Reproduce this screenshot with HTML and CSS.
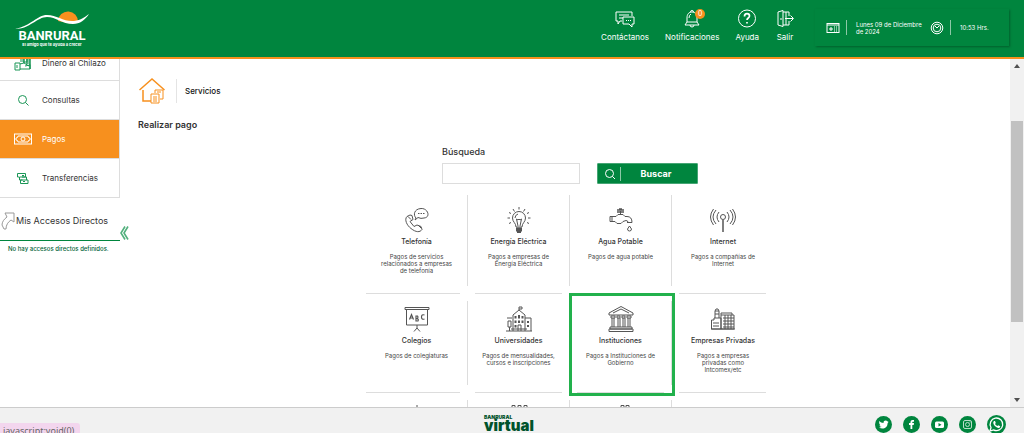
FILE: index.html
```html
<!DOCTYPE html>
<html lang="es">
<head>
<meta charset="utf-8">
<title>Banrural Virtual</title>
<link rel="stylesheet" href="styles.css">
</head>
<body>
<header class="topbar">
  <a class="brand" href="#">
    <svg class="brand-hill" width="74" height="21" viewBox="0 0 74 21"><path d="M43 12a10 10 0 1 1 20 1q-10 2-20-1z" fill="#f7901e"/><path d="M0 20C16 17 22 6 32 6c10 0 17 7 27 6 7-1 11-4 15-7-4 6-9 10-16 10-11 0-17-7-26-7C22 8 15 20 0 20z" fill="#fff"/></svg>
    <span class="brand-name">BANRURAL</span>
    <span class="brand-tag">El amigo que te ayuda a crecer</span>
  </a>
  <nav class="topnav">
    <a class="topnav-item" href="#">
      <svg width="20" height="20" viewBox="0 0 20 20" class="line"><path d="M7 12H5l-2 3v-3H1V3h16v4M4 6h10M4 9h4M8 8h11v7h-2v3l-3-3H8z"/><path d="M11 11.500h1m1 0h1m1 0h1"/></svg>
      Contáctanos
    </a>
    <a class="topnav-item" href="#">
      <span class="bell">
        <svg width="20" height="20" viewBox="0 0 20 20" class="line"><path d="M5 13V9c0-4 2-6 5-6s5 2 5 6v4l2 3H3l2-3zh10M8.500 3a1.500 1.500 0 1 1 3 0M8 16a2 2 0 0 0 4 0M7 9q0-3 2-4"/></svg>
        <span class="badge">0</span>
      </span>
      Notificaciones
    </a>
    <a class="topnav-item" href="#">
      <svg width="20" height="20" viewBox="0 0 20 20" class="line"><circle cx="10" cy="9.500" r="8.500"/><path d="M7.500 7.500c0-4 5-3.500 5-.5 0 2-2.500 2-2.500 4" stroke-width="1.700"/><path d="M10 13v1.500" stroke-width="1.700"/></svg>
      Ayuda
    </a>
    <a class="topnav-item" href="#">
      <svg width="20" height="20" viewBox="0 0 20 20" class="line"><path d="M3 3l5-1.500v16L3 16zM8 3h6v4M14 12v4H8M6 9v2M10 9.500h8M15.500 6.500l3 3-3 3M11 3v13" /></svg>
      Salir
    </a>
  </nav>
  <div class="clock">
    <svg width="14" height="14" viewBox="0 0 14 14" class="line"><rect x="1" y="2.500" width="12" height="9"/><path d="M1 4h12M4 7h2v2H4zM8 6h1m1 0h1M8 8h1m1 0h1M8 10h1m1 0h1"/></svg>
    <span class="clock-date">Lunes 09 de Diciembre de 2024</span>
    <svg width="14" height="14" viewBox="0 0 14 14" class="line"><circle cx="7" cy="7" r="5.800"/><circle cx="7" cy="7" r="3.800"/><path d="M5 5l2 2 2-2"/></svg>
    <span class="clock-time">10:53 Hrs.</span>
  </div>
</header>

<div class="middle">
  <aside class="sidebar">
    <nav class="menu">
      <a class="menu-item" href="#">
        <svg width="18" height="18" viewBox="0 0 18 18" class="green"><path d="M7 8V2h8v8M9 4h4v4H9zM1 9h5v7H1zM6 10l4-1 5 3 1-2M6 15h10v-4l-5 1M3 11v3"/><path d="M10 2v7m3-7v8M16 3v12" stroke-width="1.500"/></svg>
        Dinero al Chilazo
      </a>
      <a class="menu-item" href="#">
        <svg width="18" height="18" viewBox="0 0 18 18" class="green"><circle cx="8.500" cy="8.500" r="4"/><path d="M11.500 11.500l3 3"/></svg>
        Consultas
      </a>
      <a class="menu-item active" href="#">
        <svg width="18" height="18" viewBox="0 0 18 18" class="line"><rect x="0.500" y="4" width="17" height="10"/><path d="M4 6h10q0 2 2 2v2q-2 0-2 2H4q0-2-2-2V8q2 0 2-2z"/><circle cx="9" cy="9" r="2"/></svg>
        Pagos
      </a>
      <a class="menu-item" href="#">
        <svg width="18" height="18" viewBox="0 0 18 18" class="green"><path d="M5.500 8H3.500V4.500h8V8H6M5.500 8v3h3M8 8h4.500v3M14 11H6.500v3.500H14V11M8 6.500h2M9 12.500h2"/></svg>
        Transferencias
      </a>
    </nav>
    <div class="shortcuts">
      <h2 class="shortcuts-title">
        <svg width="14" height="18" viewBox="0 0 14 18"><path d="M4 1h9v9l-3-2c-3 2-5 5-5 9H3L1 13c0-3 2-6 5-8z" fill="none" stroke="#999"/></svg>
        Mis Accesos Directos
      </h2>
      <p class="shortcuts-empty">No hay accesos directos definidos.</p>
    </div>
    <button class="collapse" type="button" aria-label="Ocultar menú">
      <svg width="9" height="14" viewBox="0 0 9 14"><path d="M5 .5L1 7l4 6.500M8 .5L4 7l4 6.500" fill="none" stroke="#52b07d" stroke-width="1.600"/></svg>
    </button>
  </aside>

  <main class="content">
    <div class="crumb">
      <svg width="28" height="28" viewBox="0 0 28 28" fill="none" stroke="#f7901e" stroke-width="1.500"><path d="M1.500 13L14 2l12.500 11M5 13v11h8"/><path d="M17 16v-3h8v9h-3M19 15h4" stroke-width="1"/><path d="M13 17h8v9h-8zM15 20h4M15 22h4M15 24h4" stroke-width="1"/></svg>
      <span class="crumb-text">Servicios</span>
    </div>
    <h1 class="page-title">Realizar pago</h1>

    <form class="search">
      <label class="search-label" for="q">Búsqueda</label>
      <div class="search-row">
        <input class="search-input" id="q" type="text">
        <button class="search-button" type="button">
          <svg width="12" height="12" viewBox="0 0 12 12" class="line"><circle cx="5.500" cy="5.500" r="4"/><path d="M8.500 8.500L11 11"/></svg>
          <span class="search-button-text">Buscar</span>
        </button>
      </div>
    </form>

    <div class="services">
      <a class="cell" href="#"><div class="tile">
        <svg width="26" height="26" viewBox="0 0 26 26" class="gray"><path d="M6 8L3 9.500c-3 3 0 9 4 12 5 4 9 4 11 1l-1-3-4-1.500-3 1.500-4-5 3-2-1-4zM4 9.500l3 3M14 18l3 3"/><path d="M12 11c-3-3-2-9 5-9.500s10 9 3 9.500q-3 1-6-.5L11 13z"/><path d="M14 6.500h1.500m1 0H18m1 0h1.500"/></svg>
        <h3 class="tile-title">Telefonía</h3><p class="tile-text">Pagos de servicios relacionados a empresas de telefonía</p></div></a>
      <a class="cell" href="#"><div class="tile">
        <svg width="26" height="26" viewBox="0 0 26 26" class="gray"><path d="M10 20c0-4-3.500-5-3.500-9a6.500 6.500 0 0 1 13 0c0 4-3.500 5-3.500 9zM9 11q0-3 3-4"/><path d="M10 21.500h6M10 23.500h6M11 25h4" stroke-width="1.800"/><path d="M12 19l-1.500-7 1.500 1 1-1 1 1 1.500-1L14 19M13 0v2.500M7 2l1.500 2.500M19 2l-1.500 2.500M3 5.500l2 1M23 5.500l-2 1M1.500 11H4M22 11h2.500M3 16.500l2-1M23 16.500l-2-1"/></svg>
        <h3 class="tile-title">Energía Eléctrica</h3><p class="tile-text">Pagos a empresas de Energía Eléctrica</p></div></a>
      <a class="cell" href="#"><div class="tile">
        <svg width="26" height="26" viewBox="0 0 26 26" class="gray"><path d="M2 9.500h6l2-2h5l2 2h2q5 0 5 6h-4q0-2-2-2l-3 1-2 2H9l-2-2H2zM4 9.500v5M12.500 7V4M19 15.500h5M21.500 19l-2 3a2 2 0 1 0 4 0z"/><path d="M9 3h7M9 5h7M11 2h3" stroke-width="1.500"/></svg>
        <h3 class="tile-title">Agua Potable</h3><p class="tile-text">Pagos de agua potable</p></div></a>
      <a class="cell" href="#"><div class="tile">
        <svg width="26" height="26" viewBox="0 0 26 26" class="gray"><circle cx="13" cy="10" r="2.500"/><path d="M13 13v12" stroke-width="1.500"/><path d="M9 5q-4 5 0 10M17 5q4 5 0 10M6 3q-6 7 0 14M20 3q6 7 0 14M3.500 2q-6 8 0 16M22.500 2q6 8 0 16"/></svg>
        <h3 class="tile-title">Internet</h3><p class="tile-text">Pagos a compañías de Internet</p></div></a>

      <a class="cell" href="#"><div class="tile">
        <svg width="26" height="26" viewBox="0 0 26 26" class="gray"><path d="M1 1.500h24v2H1zM2.500 4v15h21V4M13 19v3m-3 3.500l3-3.500 3 3.500"/><path d="M5.500 13.500l2-5 2 5M6.500 12h2M12 10h1.500q1 1 0 2.500H12zm0 2.500V15h2q1-1-.5-2.500M20.500 9q-3-1-3 2t3 2" stroke-width="1.200"/></svg>
        <h3 class="tile-title">Colegios</h3><p class="tile-text">Pagos de colegiaturas</p></div></a>
      <a class="cell" href="#"><div class="tile">
        <svg width="26" height="26" viewBox="0 0 26 26" class="gray"><path d="M7 25V9l6-5 6 5v16M13 4V1h3v2h-3M19 12h6v13M0 25h26M3.500 25v-4M2 15h3v6H2zM1 12h5M5 23h16M12 25v-6h3v6"/><path d="M9.500 10v2.500M13 9v3.500M16.500 10v2.500M9.500 14.500V17M13 14.500V17M16.500 14.500V17M9.500 19v2.500M22 15v2M22 19v2" stroke-width="2"/></svg>
        <h3 class="tile-title">Universidades</h3><p class="tile-text">Pagos de mensualidades, cursos e inscripciones</p></div></a>
      <a class="cell" href="#"><div class="tile">
        <svg width="26" height="26" viewBox="0 0 26 26" class="gray"><path d="M1 7l12-6.500L25 7v2H1zM5 7l8-4 8 4M3 10h4v2H3zM9 10h3v2H9zM14 10h3v2h-3zM19 10h4v2h-4z"/><path d="M4 12v9M6 12v9M10 12v9M12 12v9M15 12v9M17 12v9M20 12v9M22 12v9M2 21h22v2H2zM1 23h24v2.500H1z"/></svg>
        <h3 class="tile-title">Instituciones</h3><p class="tile-text">Pagos a Instituciones de Gobierno</p></div><span class="highlight"></span></a>
      <a class="cell" href="#"><div class="tile">
        <svg width="26" height="26" viewBox="0 0 26 26" class="gray"><path d="M1.500 23V14H4v-2h7v11zM5 12V5h4v7M5 8h4M5 5l1-2h2l1 2M11 23V9h13v14zM11 9V7h11v2M1 23h24M3 17h6M3 20h6"/><path d="M15 9v14M18 9v14M21 9v14M13 12h11M13 15h11M13 18h11M13 21h11"/></svg>
        <h3 class="tile-title">Empresas Privadas</h3><p class="tile-text">Pagos a empresas privadas como Intcomex/etc</p></div></a>

      <a class="cell" href="#"><div class="tile"><svg width="26" height="26" viewBox="0 0 26 26" class="gray"><path d="M13 0v10M8 10h10"/></svg></div></a>
      <a class="cell" href="#"><div class="tile"><svg width="26" height="26" viewBox="0 0 26 26" class="gray"><path d="M6 .5h3v9H6zM12 .5h3v9h-3zM18 .5h3v9h-3z"/></svg></div></a>
      <a class="cell" href="#"><div class="tile"><svg width="26" height="26" viewBox="0 0 26 26" class="gray"><path d="M13 .5h3v9h-3zM18 .5h3v9h-3z"/></svg></div></a>
      <a class="cell" href="#"><div class="tile"></div></a>
    </div>
  </main>

  <div class="scrollbar">
    <svg width="6" height="4" viewBox="0 0 6 4"><path d="M0 4l3-4 3 4z" fill="#505050"/></svg>
    <span class="scroll-thumb"></span>
    <svg width="6" height="4" viewBox="0 0 6 4"><path d="M0 0l3 4 3-4z" fill="#505050"/></svg>
  </div>
</div>

<footer class="footer">
  <div class="foot-logo"><span class="foot-small">BANRURAL</span><span class="foot-big">virtual</span></div>
  <div class="social">
    <a href="#" aria-label="Twitter"><svg width="17" height="17" viewBox="0 0 17 17"><circle cx="8.500" cy="8.500" r="8.500" fill="#00853e"/><path d="M4 5q2 2 4.500 2c0-3 3-3 4-1.500l1-.5-.8 1.300.8-.1-1 1.200c0 5-5 6-8.500 4.100q2 0 2.500-.8-2 0-2-1.500h1Q4 8.500 4 5z" fill="#fff"/></svg></a>
    <a href="#" aria-label="Facebook"><svg width="17" height="17" viewBox="0 0 17 17"><circle cx="8.500" cy="8.500" r="8.500" fill="#00853e"/><path d="M7.500 13V9H6V7h1.500V5.800Q7.500 4 9.500 4H11v1.800H9.800q-.5 0-.5.600V7H11l-.3 2H9.300v4z" fill="#fff"/></svg></a>
    <a href="#" aria-label="YouTube"><svg width="17" height="17" viewBox="0 0 17 17"><circle cx="8.500" cy="8.500" r="8.500" fill="#00853e"/><rect x="4" y="5.500" width="9" height="6.500" rx="1.500" fill="#fff"/><path d="M7.500 7v3.500l3-1.700z" fill="#00853e"/></svg></a>
    <a href="#" aria-label="Instagram"><svg width="17" height="17" viewBox="0 0 17 17"><circle cx="8.500" cy="8.500" r="8.500" fill="#00853e"/><g fill="none" stroke="#b8dcc8"><rect x="4.500" y="4.500" width="8" height="8" rx="1.500"/><circle cx="8.500" cy="8.500" r="2"/><path d="M10.500 6h1"/></g></svg></a>
    <a href="#" aria-label="WhatsApp"><svg width="19" height="19" viewBox="0 0 19 19"><circle cx="9.500" cy="9.500" r="9.500" fill="#00853e"/><path d="M3 16l1-3.500a6.300 6.300 0 1 1 2.500 2.400z" fill="none" stroke="#fff" stroke-width="1.300"/><path d="M7 6l1 0 .8 2-.8.900q.8 1.500 2.500 2.200l.8-.9 1.900 1c0 2-2 2-3.200 1.400Q7.500 11.500 6.500 9 5.800 7 7 6z" fill="#fff"/></svg></a>
  </div>
  <span class="status">javascript:void(0)</span>
</footer>
</body>
</html>
```
FILE: styles.css
```css
* { box-sizing: border-box; }
body {
  margin: 0;
  height: 100vh;
  display: flex;
  flex-direction: column;
  overflow: hidden;
  background: #fff;
  color: #333;
  font-family: Inter, "Open Sans", sans-serif;
  font-size: 8px;
}
a { color: inherit; text-decoration: none; }
h1, h2, h3, p { margin: 0; }
svg { display: block; flex: none; }
.line { fill: none; stroke: currentColor; stroke-width: 1; }
.green { fill: none; stroke: #1b9657; stroke-width: 1; }
.gray { fill: none; stroke: #555; stroke-width: 1; }

.topbar {
  flex: none;
  display: flex;
  align-items: flex-start;
  padding: 9px 15px 10px;
  background: #00853e;
  border-bottom: 2px solid #f7901e;
  color: #fff;
}
.brand {
  display: flex;
  flex-direction: column;
  align-items: center;
  margin-right: auto;
  font-weight: 700;
}
.brand-name {
  font-family: Roboto, sans-serif;
  font-size: 13px;
  line-height: 12px;
}
.brand-tag { font-size: 4px; line-height: 5px; }
.topnav { display: flex; gap: 16px; }
.topnav-item {
  display: flex;
  flex-direction: column;
  align-items: center;
  gap: 3px;
  font-size: 8px;
  line-height: 10px;
}
.bell { position: relative; }
.badge {
  position: absolute;
  top: 0;
  right: -3px;
  width: 10px;
  height: 10px;
  border-radius: 50%;
  background: #f7901e;
  font-size: 7px;
  text-align: center;
}
.clock {
  display: flex;
  align-items: center;
  width: 194px;
  height: 37px;
  margin-left: 20px;
  padding-left: 11px;
  font-size: 6px;
  line-height: 7px;
  box-shadow: 1px 1px 2px #00602c;
}
.clock-date, .clock-time {
  display: flex;
  align-items: center;
  height: 15px;
  margin-left: 6px;
  padding-left: 9px;
  border-left: 1px solid #8cc8a6;
}
.clock-date { width: 84px; }

.middle { flex: 1; display: flex; min-height: 0; overflow: hidden; }
.sidebar { position: relative; flex: none; width: 120px; }
.menu { margin-top: -13px; border-right: 1px solid #ddd; }
.menu-item {
  display: flex;
  align-items: center;
  gap: 10px;
  height: 39px;
  padding-left: 14px;
  border-bottom: 1px solid #ddd;
  font-size: 8px;
}
.menu-item:first-child { height: 35px; }
.menu-item.active { background: #f7901e; color: #fff; }
.shortcuts-title {
  display: flex;
  align-items: center;
  gap: 1px;
  padding: 14px 0 10px 1px;
  border-bottom: 1px solid #00853e;
  font-size: 9px;
  font-weight: 400;
  line-height: 14px;
  white-space: nowrap;
}
.shortcuts-empty {
  padding: 4px 8px;
  font-size: 6px;
  line-height: 8px;
  font-weight: 500;
  color: #006236;
  white-space: nowrap;
}
.collapse {
  position: absolute;
  right: -9px;
  top: 167px;
  padding: 0;
  border: 0;
  background: none;
}

.content { flex: 1; min-width: 0; padding: 18px 8px 0 18px; }
.crumb { display: flex; align-items: center; gap: 10px; }
.crumb-text {
  padding-left: 8px;
  border-left: 1px solid #e4e4e4;
  font-size: 8px;
  font-weight: 500;
  line-height: 24px;
  color: #111;
}
.page-title {
  margin-top: 14px;
  font-size: 9px;
  font-weight: 600;
  line-height: 12px;
}
.search, .services { width: 408px; margin-left: auto; margin-right: auto; }
.search { padding-left: 76px; margin-top: 15px; }
.search-label { font-size: 9px; font-weight: 500; line-height: 12px; display: block; }
.search-row { display: flex; gap: 17px; margin-top: 5px; }
.search-input {
  width: 138px;
  height: 21px;
  border: 1px solid #ddd;
  background: #fff;
}
.search-button {
  display: flex;
  align-items: center;
  gap: 4px;
  width: 101px;
  height: 21px;
  padding: 0 6px;
  border: 1px solid #45a574;
  border-radius: 1px;
  background: #00853e;
  color: #fff;
  font: 700 9px Inter, sans-serif;
}
.search-button-text { flex: 1; border-left: 1px solid #8cc8a6; line-height: 14px; }
.services {
  display: grid;
  grid-template-columns: repeat(4, 1fr);
  grid-template-rows: 106px 99px 99px;
  margin-top: 11px;
}
.cell { position: relative; display: flex; flex-direction: column; padding-bottom: 7px; }
.tile {
  flex: 1;
  display: flex;
  flex-direction: column;
  align-items: center;
  padding: 5px 12px 0;
  border-right: 1px solid #ddd;
}
.cell:nth-child(-n+4) .tile { padding-top: 12px; }
.cell:nth-child(4n) .tile { border-right: 0; }
.cell::after { content: ""; height: 1px; margin: 7px 8px 0 7px; background: #ddd; }
.cell:nth-child(4n+1)::after { margin-left: 0; }
.tile-title {
  margin-top: 4px;
  font-size: 7px;
  font-weight: 500;
  line-height: 10px;
  white-space: nowrap;
  color: #333;
}
.tile-text {
  margin-top: 6px;
  font-size: 6px;
  line-height: 7px;
  text-align: center;
  color: #444;
}
.highlight {
  position: absolute;
  inset: -8px -3px 4px -1px;
  border: 3px solid #22b14c;
}

.scrollbar {
  flex: none;
  display: flex;
  flex-direction: column;
  align-items: center;
  width: 14px;
  padding: 5px 0 5px;
  background: #f1f1f1;
}
.scroll-thumb { width: 12px; height: 201px; margin: 53px 0 auto; background: #c1c1c1; }

.footer {
  position: relative;
  flex: none;
  display: flex;
  justify-content: flex-end;
  height: 26px;
  padding: 7px 18px 0 0;
  border-top: 1px solid #ccc;
  background: #f1f1f1;
}
.foot-logo {
  display: flex;
  flex-direction: column;
  margin-right: auto;
  padding-left: 484px;
  color: #00532c;
  font-weight: 900;
}
.foot-small { font-size: 5px; line-height: 5px; }
.foot-big { font-size: 15px; line-height: 12px; }
.social { display: flex; align-items: center; gap: 11px; height: 19px; }
.status {
  position: absolute;
  left: 0;
  bottom: -6px;
  height: 16px;
  padding: 1px 6px 0 3px;
  border-radius: 0 3px 0 0;
  background: #f3d6ee;
  color: #666;
  font: 9px/14px "Noto Sans", sans-serif;
}
```
